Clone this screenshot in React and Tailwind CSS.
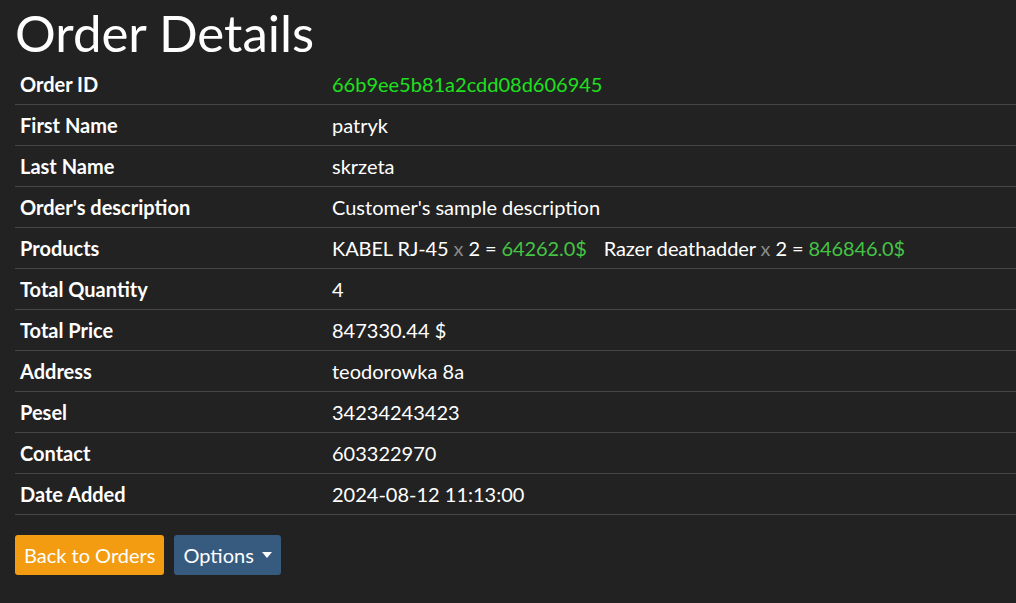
import React from "react"

const rows = [
  ["First Name", "patryk"],
  ["Last Name", "skrzeta"],
  ["Order's description", "Customer's sample description"],
]

const rows2 = [
  ["Total Quantity", "4"],
  ["Total Price", "847330.44 $"],
  ["Address", "teodorowka 8a"],
  ["Pesel", "34234243423"],
  ["Contact", "603322970"],
  ["Date Added", "2024-08-12 11:13:00"],
]

const products = [
  { name: "KABEL RJ-45", qty: 2, total: "64262.0$" },
  { name: "Razer deathadder", qty: 2, total: "846846.0$" },
]

const Row = ({ label, children }) => (
  <div className="flex h-[41px] items-center border-b border-[#464646]">
    <div className="w-[317px] shrink-0 pl-[5px] font-bold">{label}</div>
    <div>{children}</div>
  </div>
)

export default function App() {
  return (
    <div
      className="min-h-[603px] bg-[#222222] text-white pl-[15px] text-[20px] leading-[24px]"
      style={{ fontFamily: "Lato, 'Noto Sans', sans-serif" }}
    >
      <h1 className="text-[51px] leading-[61px] pt-[2px] mb-[1px]">Order Details</h1>

      {/* 주문 정보 테이블 */}
      <div>
        <Row label="Order ID">
          <span className="text-[#1ee01e]">66b9ee5b81a2cdd08d606945</span>
        </Row>
        {rows.map(([k, v]) => (
          <Row key={k} label={k}>{v}</Row>
        ))}
        <Row label="Products">
          <span className="flex gap-[17px]">
            {products.map((p) => (
              <span key={p.name} className="tracking-[-0.1px]">
                {p.name} <span className="text-[#888888]">x</span> {p.qty} ={" "}
                <span className="text-[#44c444]">{p.total}</span>
              </span>
            ))}
          </span>
        </Row>
        {rows2.map(([k, v]) => (
          <Row key={k} label={k}>{v}</Row>
        ))}
      </div>

      <div className="flex gap-[10px] mt-[20px]">
        <button className="h-[40px] px-[9px] rounded-[3px] bg-[#f39c12] text-white">
          Back to Orders
        </button>
        <button className="h-[40px] px-[9px] rounded-[3px] bg-[#375a7f] text-white flex items-center gap-[8px]">
          Options
          <svg width="10" height="6" viewBox="0 0 10 6">
            <path d="M0 0h10L5 6z" fill="white" />
          </svg>
        </button>
      </div>
    </div>
  )
}
